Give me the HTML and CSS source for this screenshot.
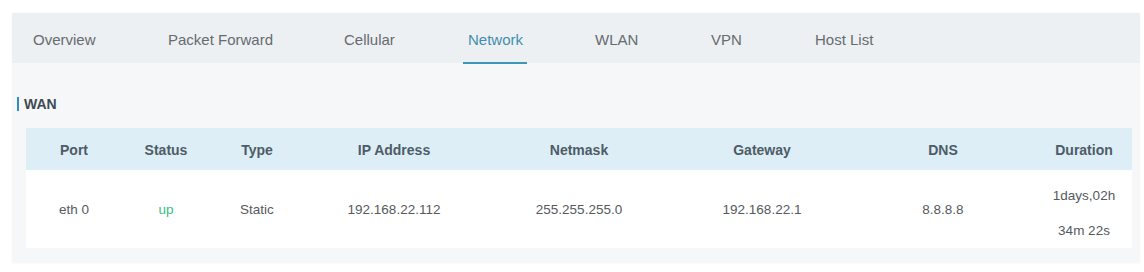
FILE: index.html
```html
<!DOCTYPE html>
<html>
<head>
<meta charset="utf-8">
<link rel="stylesheet" href="styles.css">
</head>
<body>
<div class="panel">
  <nav class="tabs">
    <span class="tab t1">Overview</span>
    <span class="tab t2">Packet Forward</span>
    <span class="tab t3">Cellular</span>
    <span class="tab t4 active">Network</span>
    <span class="tab t5">WLAN</span>
    <span class="tab t6">VPN</span>
    <span class="tab t7">Host List</span>
  </nav>
  <div class="content">
    <div class="section-title">WAN</div>
    <div class="table">
      <div class="row head">
        <div>Port</div><div>Status</div><div>Type</div><div>IP Address</div><div>Netmask</div><div>Gateway</div><div>DNS</div><div>Duration</div>
      </div>
      <div class="row body">
        <div>eth 0</div><div class="up">up</div><div>Static</div><div>192.168.22.112</div><div>255.255.255.0</div><div>192.168.22.1</div><div>8.8.8.8</div><div class="dur">1days,02h<br>34m 22s</div>
      </div>
    </div>
  </div>
</div>
</body>
</html>
```

FILE: styles.css
```css
html, body {
  margin: 0;
  padding: 0;
  background: #ffffff;
}
body {
  font-family: "Liberation Sans", Arial, sans-serif;
  padding: 13px 4px 9px 12px;
}
.panel {
  width: 1128px;
  height: 250px;
  background: #f5f7f8;
  box-shadow: 0 0 2px rgba(0,0,0,0.04);
}
.tabs {
  height: 50px;
  background: #edf0f2;
  display: flex;
  align-items: stretch;
  padding-left: 21px;
}
.tab {
  position: relative;
  font-size: 15px;
  color: #666b70;
  display: flex;
  align-items: center;
  padding-top: 3px;
  box-sizing: border-box;
}
.t1 { width: 135px; }
.t2 { width: 176px; }
.t3 { width: 124px; }
.t4 { width: 127px; }
.t5 { width: 116px; }
.t6 { width: 104px; }
.t7 { width: 100px; }
.tab.active {
  color: #3f8fb0;
}
.tab.active::after {
  content: "";
  position: absolute;
  left: -5px;
  width: 64px;
  bottom: -1px;
  height: 2px;
  background: #3d98b8;
}
.content {
  padding: 33px 8px 0 5px;
}
.section-title {
  font-size: 14px;
  font-weight: bold;
  color: #3e4a53;
  border-left: 2px solid #2f8fb5;
  padding-left: 5px;
  height: 14px;
  line-height: 14px;
  margin-top: 1px;
}
.table {
  margin: 17px 0 0 9px;
  width: 1106px;
}
.row {
  display: grid;
  grid-template-columns: 96px 88px 94px 180px 190px 176px 186px 96px;
  text-align: center;
  align-items: center;
}
.row.head {
  background: #ddeef7;
  height: 42px;
  font-size: 14px;
  font-weight: bold;
  color: #4d5c66;
  padding-top: 2px;
  box-sizing: border-box;
}
.row.body {
  background: #ffffff;
  height: 78px;
  font-size: 13.5px;
  color: #555a5e;
}
.up {
  color: #3dbb7e;
}
.dur {
  line-height: 35px;
  padding-top: 7px;
}
```
